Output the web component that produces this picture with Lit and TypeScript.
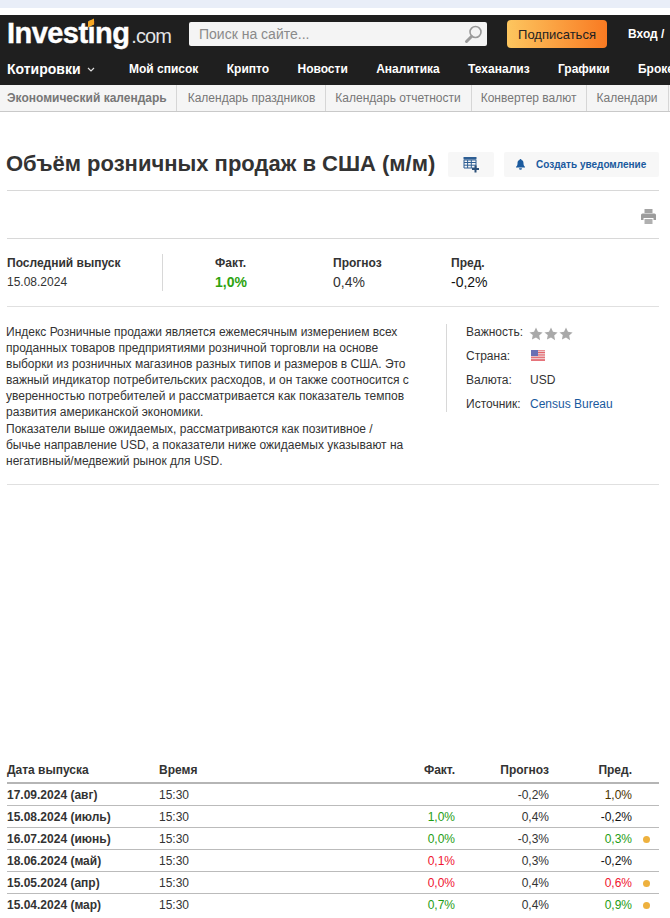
import { LitElement, html, css, svg } from "lit";
import { customElement } from "lit/decorators.js";

const nav = ["Мой список", "Крипто", "Новости", "Аналитика", "Теханализ", "Графики", "Брокеры"];
const sub = ["Календарь праздников", "Календарь отчетности", "Конвертер валют", "Календари"];
type Row = [string, string, string, string, string, string, string, boolean];
const rows: Row[] = [
  ["17.09.2024 (авг)", "", "", "-0,2%", "", "1,0%", "brown", false],
  ["15.08.2024 (июль)", "1,0%", "green", "0,4%", "", "-0,2%", "", false],
  ["16.07.2024 (июнь)", "0,0%", "green", "-0,3%", "", "0,3%", "green", true],
  ["18.06.2024 (май)", "0,1%", "red", "0,3%", "", "-0,2%", "", false],
  ["15.05.2024 (апр)", "0,0%", "red", "0,4%", "", "0,6%", "red", true],
  ["15.04.2024 (мар)", "0,7%", "green", "0,4%", "", "0,9%", "green", true],
];

@customElement("app-root")
export class AppRoot extends LitElement {
  static styles = css`
    :host { display: block; width: 670px; height: 918px; overflow: hidden; background: #fff; font-family: "Liberation Sans", Arial, sans-serif; color: #333; font-size: 12px; }
    .strip { height: 8px; background: #e9eef8; }
    .head { margin-top: 7px; height: 70px; background: #1f1f1f; overflow: hidden; }
    .top { display: flex; align-items: center; height: 38px; padding-left: 7px; box-sizing: border-box; white-space: nowrap; }
    .logo { width: 182px; flex: none; display: flex; align-items: baseline; color: #fff; position: relative; height: 30px; line-height: 30px; margin-top: -2px; }
    .logo b { font-size: 29px; letter-spacing: -0.55px; font-weight: 700; -webkit-text-stroke: 0.4px #fff; }
    .logo span { font-size: 20px; color: #e4e4e4; letter-spacing: -0.9px; margin-left: 2px; }
    .tick { position: absolute; left: 81px; top: 2px; width: 6px; height: 6px; background: #f5a623; transform: skewY(-25deg); }
    .search { width: 298px; height: 24px; flex: none; background: #f4f4f4; border-radius: 2px; display: flex; align-items: center; justify-content: space-between; padding: 0 3px 0 10px; box-sizing: border-box; color: #8a8a8a; font-size: 14px; }
    .sub-btn { margin-left: 20px; width: 100px; height: 28px; flex: none; border-radius: 4px; background: linear-gradient(90deg, #fdc65f, #f97a22); color: #222; font-size: 13px; display: flex; align-items: center; justify-content: center; }
    .login { margin-left: 21px; color: #fff; font-size: 12px; font-weight: 700; }
    .nav { display: flex; align-items: center; height: 32px; padding-left: 7px; color: #fff; font-size: 12px; font-weight: 700; white-space: nowrap; overflow: hidden; }
    .nav .first { font-size: 14px; width: 122px; flex: none; display: flex; align-items: center; gap: 6px; }
    .nav .it { margin-right: 28.4px; flex: none; }
    .subnav { height: 27px; background: #f5f5f5; border-bottom: 1px solid #c9c9c9; box-sizing: border-box; display: flex; font-size: 12px; color: #777; white-space: nowrap; overflow: hidden; }
    .subnav div { padding: 0 10px 0 9px; line-height: 26px; border-right: 1px solid #d6d6d6; height: 26px; flex: none; }
    .subnav div.s0 { padding-left: 11px; }
    .subnav .act { padding: 0 9px 0 7px; font-weight: 700; }
    .main { padding: 0 11px 0 7px; }
    .title-row { display: flex; align-items: center; height: 79px; padding-top: 26px; box-sizing: border-box; border-bottom: 1px solid #d8d8d8; }
    h1 { margin: 0 0 0 -1px; font-size: 22px; line-height: 26px; font-weight: 700; color: #333; width: 442px; flex: none; white-space: nowrap; }
    .ic-btn { width: 46px; height: 25px; flex: none; background: #f7f7f7; border-radius: 2px; display: flex; align-items: center; justify-content: center; }
    .alert { margin-left: 10px; width: 155px; height: 25px; flex: none; background: #f7f7f7; border-radius: 2px; display: flex; align-items: center; color: #1a5a9e; font-size: 10px; font-weight: 700; gap: 11px; padding-left: 12px; box-sizing: border-box; white-space: nowrap; }
    .print { height: 48px; border-bottom: 1px solid #d8d8d8; display: flex; justify-content: flex-end; align-items: center; padding: 4px 3px 0 0; box-sizing: border-box; }
    .latest { height: 68px; box-sizing: border-box; border-bottom: 1px solid #e0e0e0; display: flex; align-items: center; }
    .l1 { width: 155px; height: 37px; border-right: 1px solid #d8d8d8; line-height: 15px; flex: none; }
    .lab { font-weight: 700; font-size: 12px; line-height: 18px; color: #333; }
    .val { font-size: 12px; line-height: 18px; margin-top: 1px; }
    .cell { width: 118px; flex: none; }
    .cell .val { font-size: 14px; color: #333; }
    .first-cell { margin-left: 52px; }
    .cell .val.blk { color: #111; }
    .cell .val.big-green { color: #2ea30f; font-weight: 700; }
    .desc { display: flex; height: 178px; border-bottom: 1px solid #e0e0e0; box-sizing: border-box; padding-top: 17px; }
    .desc p { margin: 0 0 0 -1px; width: 440px; flex: none; font-size: 12px; line-height: 16.1px; color: #333; }
    .info { border-left: 1px solid #d8d8d8; height: 88px; padding-left: 19px; display: grid; grid-template-columns: 64px 1fr; align-content: start; grid-auto-rows: 24px; line-height: 17px; font-size: 12px; }
    .info a { color: #1a5a9e; text-decoration: none; }
    .stars { display: flex; gap: 1px; padding-top: 3px; margin-left: -1px; }
    .flag { display: block; margin: 2px 0 0 1px; }
    .tbl { margin-top: 275px; width: 652px; }
    .tr { display: grid; grid-template-columns: 152px 236px 60px 94px 83px 27px; height: 22px; line-height: 22px; box-sizing: border-box; border-bottom: 1px solid #bbb; white-space: nowrap; color: #333; }
    .tr:last-child { border-bottom: none; }
    .tr.th { font-weight: 700; border-bottom: 2px solid #b5b5b5; height: 24px; line-height: 21px; }
    .d { font-weight: 700; }
    .r { text-align: right; }
    .green { color: #1f9d15; }
    .red { color: #f0142f; }
    .brown { color: #4a3300; }
    .dotc { display: flex; align-items: center; justify-content: flex-end; padding-right: 9px; }
    .dot { width: 7px; height: 7px; border-radius: 50%; background: #eeb13e; }
    .black { color: #111; }
  `;

  star() {
    return svg`<svg width="14" height="14" viewBox="0 0 24 24"><path fill="#a9a9a9" d="M12 1l3.400 7.300 7.900 1-5.800 5.400 1.500 7.900L12 17.800l-7 3.800 1.500-7.900L.7 9.300l7.900-1z"/></svg>`;
  }

  render() {
    return html`
      <div class="strip"></div>
      <div class="head">
        <div class="top">
          <div class="logo"><b>Investing</b><span>.com</span><i class="tick"></i></div>
          <div class="search">
            <span>Поиск на сайте...</span>
            <svg width="20" height="20" viewBox="0 0 20 20" fill="none" stroke="#9a9a9a"><circle cx="11.500" cy="8" r="5.500" stroke-width="1.600"/><path d="M7.500 12.500L2.500 17.500" stroke-width="3" stroke-linecap="round"/></svg>
          </div>
          <div class="sub-btn">Подписаться</div>
          <div class="login">Вход /</div>
        </div>
        <div class="nav">
          <div class="first">Котировки
            <svg width="8" height="5" viewBox="0 0 8 5" fill="none" stroke="#ddd" stroke-width="1.200"><path d="M1 1l3 3 3-3"/></svg>
          </div>
          ${nav.map((n) => html`<div class="it">${n}</div>`)}
        </div>
      </div>
      <div class="subnav">
        <div class="act">Экономический календарь</div>
        ${sub.map((s, i) => html`<div class="s${i}">${s}</div>`)}
      </div>
      <div class="main">
        <div class="title-row">
          <h1>Объём розничных продаж в США (м/м)</h1>
          <div class="ic-btn">
            <svg width="17" height="17" viewBox="0 0 17 17">
              <rect x="0.500" y="1" width="13" height="2.500" fill="#2f5f94"/>
              <path d="M1 4h12v8H1z" fill="none" stroke="#2f5f94"/>
              <path d="M1 6.500h12M1 9.200h12M4.600 4v8M8.300 4v8" stroke="#2f5f94" fill="none"/>
              <path d="M12.500 9.500v7M9 13h7" stroke="#2b4f78" stroke-width="2" fill="none"/>
            </svg>
          </div>
          <div class="alert">
            <svg width="9" height="11" viewBox="0 0 9 11"><path fill="#1a5a9e" d="M4.500 0a1 1 0 011 1c1.700.4 2 1.800 2 3.500 0 1.500.5 2.500 1.500 3.300V8.500H0v-.7c1-.8 1.500-1.800 1.500-3.300 0-1.700.3-3.100 2-3.500a1 1 0 011-1zM3 9.300h3a1.500 1.500 0 01-3 0z"/></svg>
            <span>Создать уведомление</span>
          </div>
        </div>
        <div class="print">
          <svg width="15" height="15" viewBox="0 0 15 15"><path fill="#a3a3a3" d="M3.500 0h8v4h-8z"/><path fill="#9c9c9c" d="M0 6a1.500 1.500 0 011.500-1.500h12A1.500 1.500 0 0115 6v5h-2.500V9h-10v2H0z"/><path fill="#b0b0b0" d="M3.500 10h8v5h-8z"/></svg>
        </div>
        <div class="latest">
          <div class="l1"><div class="lab">Последний выпуск</div><div class="val">15.08.2024</div></div>
          <div class="cell first-cell"><div class="lab">Факт.</div><div class="val big-green">1,0%</div></div>
          <div class="cell"><div class="lab">Прогноз</div><div class="val">0,4%</div></div>
          <div class="cell"><div class="lab">Пред.</div><div class="val blk">-0,2%</div></div>
        </div>
        <div class="desc">
          <p>Индекс Розничные продажи является ежемесячным измерением всех<br>проданных товаров предприятиями розничной торговли на основе<br>выборки из розничных магазинов разных типов и размеров в США. Это<br>важный индикатор потребительских расходов, и он также соотносится с<br>уверенностью потребителей и рассматривается как показатель темпов<br>развития американской экономики.<br>Показатели выше ожидаемых, рассматриваются как позитивное /<br>бычье направление USD, а показатели ниже ожидаемых указывают на<br>негативный/медвежий рынок для USD.</p>
          <div class="info">
            <span>Важность:</span><span class="stars">${this.star()}${this.star()}${this.star()}</span>
            <span>Страна:</span>
            <svg class="flag" width="14" height="11" viewBox="0 0 14 11">
              <rect width="14" height="11" fill="#f2f2f2"/>
              <path d="M0 .8h14M0 2.500h14M0 4.200h14M0 5.900h14M0 7.600h14M0 9.300h14M0 10.600h14" stroke="#e0404a" stroke-width=".8"/>
              <rect width="7" height="6" fill="#6a6fb4"/>
            </svg>
            <span>Валюта:</span><span>USD</span>
            <span>Источник:</span><a href="#">Census Bureau</a>
          </div>
        </div>
        <div class="tbl">
          <div class="tr th"><div>Дата выпуска</div><div>Время</div><div class="r">Факт.</div><div class="r">Прогноз</div><div class="r">Пред.</div><div></div></div>
          ${rows.map((r) => html`<div class="tr">
            <div class="d">${r[0]}</div><div>15:30</div>
            <div class="r ${r[2]}">${r[1]}</div>
            <div class="r">${r[3]}</div>
            <div class="r ${r[6] || "black"}">${r[5]}</div>
            <div class="dotc">${r[7] ? html`<span class="dot"></span>` : ""}</div>
          </div>`)}
        </div>
      </div>
    `;
  }
}
